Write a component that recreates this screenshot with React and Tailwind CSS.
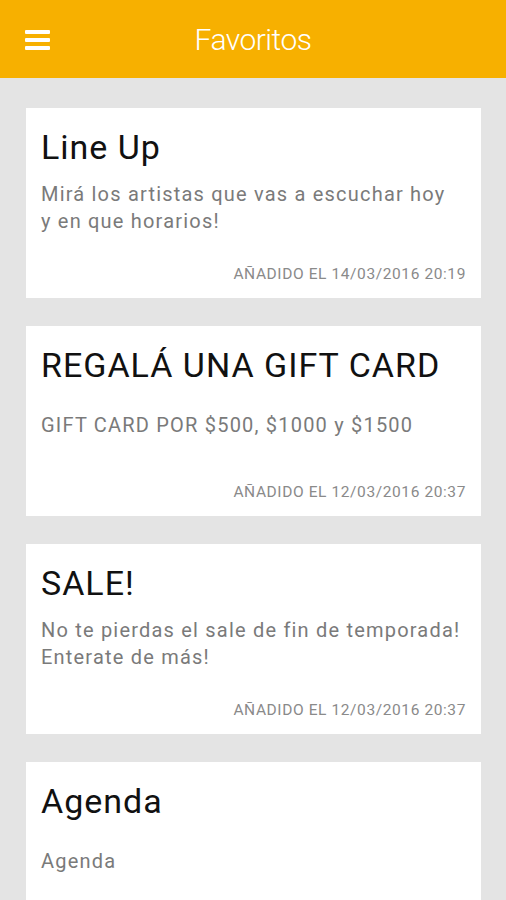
import React from "react";

const items = [
  {
    title: "Line Up",
    body: ["Mirá los artistas que vas a escuchar hoy", "y en que horarios!"],
    date: "AÑADIDO EL 14/03/2016 20:19",
  },
  {
    title: "REGALÁ UNA GIFT CARD",
    body: ["GIFT CARD POR $500, $1000 y $1500"],
    date: "AÑADIDO EL 12/03/2016 20:37",
  },
  {
    title: "SALE!",
    body: ["No te pierdas el sale de fin de temporada!", "Enterate de más!"],
    date: "AÑADIDO EL 12/03/2016 20:37",
  },
  {
    title: "Agenda",
    body: ["Agenda"],
    date: null,
  },
];

function Card({ item }) {
  return (
    <div className="h-[190px] shrink-0 bg-white pl-[15px] pr-[15px] flex flex-col">
      <div className="pt-[19px] text-[34px] leading-[40px] tracking-[1px] text-[#111111]">
        {item.title}
      </div>
      <div className="mt-[14px] h-[53px] flex flex-col justify-center text-[20px] leading-[26.6px] tracking-[1.2px] text-[#7a7a7a]">
        {item.body.map((l, i) => (
          <div key={i} className="whitespace-nowrap">{l}</div>
        ))}
      </div>
      {item.date && (
        <div className="mt-auto pb-[14px] text-right text-[15.5px] leading-[20px] tracking-[0.6px] text-[#8a8a8a]">
          {item.date}
        </div>
      )}
    </div>
  );
}

export default function App() {
  return (
    <div
      className="w-[506px] h-[900px] overflow-hidden bg-[#e4e4e4] flex flex-col"
      style={{ fontFamily: "Roboto, 'Noto Sans', sans-serif" }}
    >
      <header className="h-[78px] shrink-0 bg-[#f7b000] flex items-center relative">
        <div className="absolute left-[25px] top-[30px] flex flex-col gap-[4px]">
          <div className="w-[25px] h-[4px] bg-white rounded-[1px]" />
          <div className="w-[25px] h-[4px] bg-white rounded-[1px]" />
          <div className="w-[25px] h-[4px] bg-white rounded-[1px]" />
        </div>
        <div className="flex-1 text-center text-white text-[30px] font-light leading-[40px] tracking-[-0.5px] pt-[2px]">
          Favoritos
        </div>
      </header>
      <main className="flex flex-col gap-[28px] pt-[30px] pl-[26px] pr-[25px]">
        {items.map((it, i) => (
          <Card key={i} item={it} />
        ))}
      </main>
    </div>
  );
}
